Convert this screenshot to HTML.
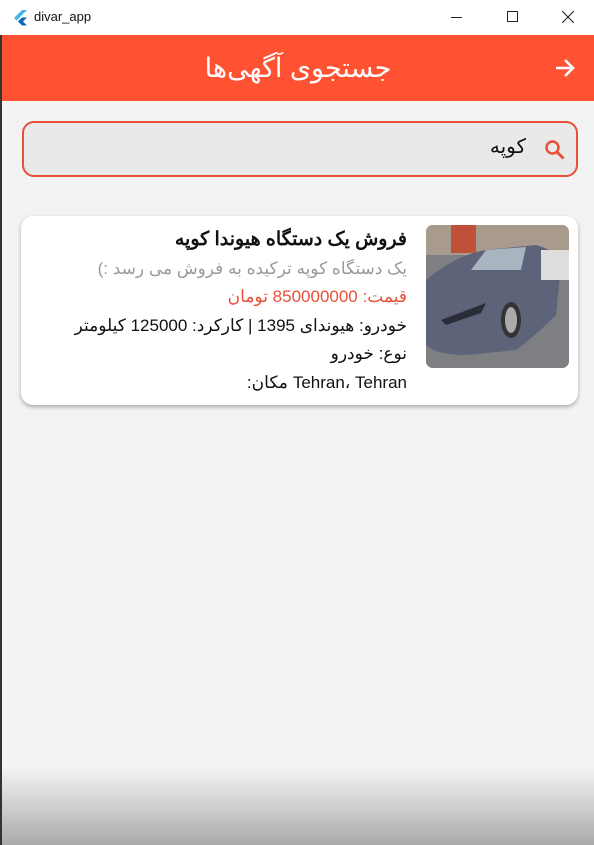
<!DOCTYPE html>
<html><head><meta charset="utf-8"><style>
*{margin:0;padding:0;box-sizing:border-box}
body{width:594px;height:845px;overflow:hidden;background:#f3f3f3;font-family:"Liberation Sans","Noto Sans CJK SC",sans-serif;position:relative}
.tb{position:absolute;left:0;top:0;width:594px;height:35px;background:#fff}
.tb .t{position:absolute;left:34px;top:9px;font-size:13px;color:#111}
.ab{position:absolute;left:2px;top:35px;width:592px;height:66px;background:#ff5233;color:#fff}
.ab .h{position:absolute;left:0;right:0;top:18px;text-align:center;font-size:27px;direction:rtl}
.search{position:absolute;left:22px;top:121px;width:556px;height:56px;border:2px solid #e8503a;border-radius:12px;background:#e9e9e9}
.search .q{position:absolute;right:50px;top:11px;font-size:20px;color:#111;direction:rtl}
.card{position:absolute;left:21px;top:216px;width:557px;height:189px;background:#fff;border-radius:12px;box-shadow:0 2px 4px rgba(0,0,0,.3)}
.img{position:absolute;left:405px;top:9px;width:143px;height:143px;border-radius:7px;overflow:hidden}
.txt{position:absolute;right:171px;top:10px;direction:rtl;text-align:right;white-space:nowrap}
.txt div{height:28.6px;line-height:28.6px;font-size:17px;color:#111}
.grad{position:absolute;left:0;top:768px;width:594px;height:77px;background:linear-gradient(#f3f3f3,#d6d6d6 40%,#aaa)}
</style></head><body>
<div class="tb">
<svg style="position:absolute;left:12px;top:9px" width="18" height="18" viewBox="0 0 18 18"><path d="M10 1L2 9l2.5 2.5L15 1z" fill="#45b3f0"/><path d="M10 8.5l-4 4 4 4h5l-4-4 4-4z" fill="#0a69b8"/></svg>
<div class="t">divar_app</div>
<div style="position:absolute;left:451px;top:17px;width:11px;height:1px;background:#222"></div>
<div style="position:absolute;left:507px;top:11px;width:11px;height:11px;border:1px solid #222"></div>
<svg style="position:absolute;left:562px;top:11px" width="12" height="12" viewBox="0 0 12 12"><path d="M0 0L12 12M12 0L0 12" stroke="#222" stroke-width="1.1"/></svg>
</div>
<div class="ab">
<div class="h">جستجوی آگهی‌ها</div>
<svg style="position:absolute;left:552px;top:22px" width="22" height="22" viewBox="0 0 22 22"><path d="M2 11H19M11 3l8 8-8 8" stroke="#fff" stroke-width="2.6" fill="none"/></svg>
</div>
<div class="search">
<div class="q">کوپه</div>
<svg style="position:absolute;left:519px;top:15px" width="24" height="24" viewBox="0 0 24 24"><circle cx="9.5" cy="9.5" r="6" stroke="#e8503a" stroke-width="2.5" fill="none"/><path d="M14 14l6.5 6.5" stroke="#e8503a" stroke-width="3"/></svg>
</div>
<div class="card">
<div class="img"><svg width="143" height="143" viewBox="0 0 143 143">
<rect width="143" height="143" fill="#8a8c92"/>
<rect width="143" height="30" fill="#a89a8c"/>
<rect x="25" y="0" width="25" height="28" fill="#c0503a"/>
<rect x="0" y="30" width="143" height="113" fill="#7e7f83"/>
<path d="M0 55 Q30 30 60 25 L110 20 Q130 25 135 40 L130 90 Q110 110 90 125 L40 130 Q10 130 0 120Z" fill="#5d6378"/>
<path d="M45 45 L60 25 L100 22 L95 45Z" fill="#a8b4c0"/>
<ellipse cx="85" cy="95" rx="10" ry="18" fill="#333"/><ellipse cx="85" cy="95" rx="6" ry="13" fill="#aaa"/>
<path d="M15 95 L60 78 L55 88 L20 100Z" fill="#2a2d38"/>
<rect x="115" y="25" width="28" height="30" fill="#ddd"/>
</svg></div>
<div class="txt">
<div style="font-weight:bold;font-size:19px">فروش یک دستگاه هیوندا کوپه</div>
<div style="color:#9a9a9a">یک  دستگاه کوپه ترکیده به فروش می رسد :)</div>
<div style="color:#e8503a">قیمت: 850000000 تومان</div>
<div>خودرو: هیوندای 1395 | کارکرد: 125000 کیلومتر</div>
<div>نوع: خودرو</div>
<div style="display:flex;direction:ltr;flex-direction:row;justify-content:flex-end"><span>:</span><span>مکان</span><span style="width:5px"></span><span>Tehran، Tehran</span></div>
</div>
</div>
<div class="grad"></div>
<div style="position:absolute;left:0;top:35px;width:2px;height:810px;background:#333"></div>
</body></html>
